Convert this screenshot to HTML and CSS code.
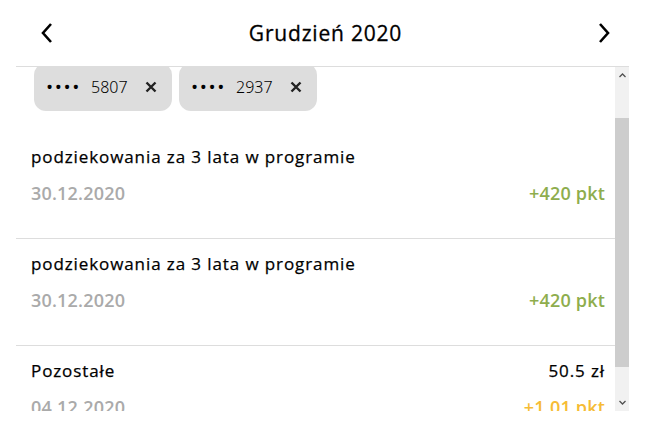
FILE: index.html
```html
<!DOCTYPE html>
<html>
  <head>
    <meta charset="UTF-8">
    <title>Historia punktów</title>
    <link rel="stylesheet" href="styles.css">
  </head>
  <body>
    <div id="panel">
      <div id="month-bar">
        <button class="nav" title="Poprzedni miesiąc">
          <svg width="14" height="22" viewBox="0 0 14 22"><path d="M11 2 L3 11 L11 20" fill="none" stroke="#000" stroke-width="2.6"/></svg>
        </button>
        <h1>Grudzień 2020</h1>
        <button class="nav" title="Następny miesiąc">
          <svg width="14" height="22" viewBox="0 0 14 22"><path d="M3 2 L11 11 L3 20" fill="none" stroke="#000" stroke-width="2.6"/></svg>
        </button>
      </div>
      <div id="body">
        <div id="list">
          <div id="cards">
            <span class="chip"><span class="dots">••••</span><span class="num">5807</span>
              <svg class="x" width="12" height="12" viewBox="0 0 12 12"><path d="M1.5 1.5 L10.5 10.5 M10.5 1.5 L1.5 10.5" stroke="#222" stroke-width="2.4"/></svg></span>
            <span class="chip"><span class="dots">••••</span><span class="num">2937</span>
              <svg class="x" width="12" height="12" viewBox="0 0 12 12"><path d="M1.5 1.5 L10.5 10.5 M10.5 1.5 L1.5 10.5" stroke="#222" stroke-width="2.4"/></svg></span>
          </div>
          <div class="entry">
            <div class="row"><span class="name">podziekowania za 3 lata w programie</span></div>
            <div class="row sub"><span class="date">30.12.2020</span><span class="pts">+420 pkt</span></div>
          </div>
          <div class="entry">
            <div class="row"><span class="name">podziekowania za 3 lata w programie</span></div>
            <div class="row sub"><span class="date">30.12.2020</span><span class="pts">+420 pkt</span></div>
          </div>
          <div class="entry">
            <div class="row"><span class="name">Pozostałe</span><span class="amount">50.5 zł</span></div>
            <div class="row sub"><span class="date">04.12.2020</span><span class="pts gold">+1.01 pkt</span></div>
          </div>
          <div class="entry">
            <div class="row"><span class="name">Pozostałe</span><span class="amount">12.0 zł</span></div>
            <div class="row sub"><span class="date">02.12.2020</span><span class="pts gold">+0.24 pkt</span></div>
          </div>
        </div>
        <div id="bar">
          <div class="arrow"><svg width="7" height="5" viewBox="0 0 7 5"><path d="M0.5 4 L3.5 1 L6.5 4" fill="none" stroke="#505050" stroke-width="1.3"/></svg></div>
          <div class="track">
            <div class="gap-top"></div>
            <div class="thumb"></div>
            <div class="gap-bottom"></div>
          </div>
          <div class="arrow"><svg width="7" height="5" viewBox="0 0 7 5"><path d="M0.5 1 L3.5 4 L6.5 1" fill="none" stroke="#505050" stroke-width="1.3"/></svg></div>
        </div>
      </div>
    </div>
    <script>
      // list is a little scrolled so the card chips sit under the header line
      document.getElementById('list').scrollTop = 4;
    </script>
  </body>
</html>
```

FILE: styles.css
```css
html,
body {
  margin: 0;
  padding: 0;
  background: #fff;
  color: #000;
  font-family: "Open Sans", Lato, sans-serif;
}

#panel {
  margin: 0 20px 0 16px;
}

#month-bar {
  height: 66px;
  display: flex;
  align-items: center;
  justify-content: space-between;
  padding: 0 18px 0 24px;
  border-bottom: 1px solid #ddd;
}

#month-bar h1 {
  margin: 0;
  font-size: 21px;
  font-weight: 500;
  letter-spacing: 0.8px;
  -webkit-text-stroke: 0.3px #000;
}

.nav {
  border: 0;
  background: none;
  padding: 0;
  display: flex;
}

#body {
  display: flex;
  height: 344px;
}

#list {
  flex: 1;
  overflow: hidden;
}

#cards {
  display: flex;
  gap: 7px;
  padding: 0 0 21px 18px;
}

.chip {
  display: flex;
  align-items: center;
  width: 138px;
  height: 48px;
  box-sizing: border-box;
  padding: 0 0 0 12px;
  background: #ddd;
  border-radius: 12px;
  font-size: 16px;
}

.chip .dots {
  font-size: 19px;
  letter-spacing: 1.6px;
  width: 45px;
}

.chip .num {
  font-family: "Noto Sans", sans-serif;
  font-weight: 300;
  width: 54px;
}

.entry {
  padding: 15px 10px 35px 15px;
  border-bottom: 1px solid #ddd;
}

.row {
  display: flex;
  justify-content: space-between;
  line-height: 20px;
  font-size: 17px;
  font-weight: 500;
  letter-spacing: 0.9px;
  -webkit-text-stroke: 0.25px #000;
}

.row.sub {
  margin-top: 16px;
  font-size: 18px;
  font-weight: 600;
  letter-spacing: 0.2px;
  -webkit-text-stroke: 0;
}

.date {
  color: #aaa;
}

.pts {
  color: #8ead4d;
}

.pts.gold {
  color: #f6bc35;
}

#bar {
  width: 14px;
  display: flex;
  flex-direction: column;
  background: #f1f1f1;
}

.arrow {
  height: 17px;
  display: flex;
  align-items: center;
  justify-content: center;
}

.track {
  flex: 1;
  display: flex;
  flex-direction: column;
}

.gap-top {
  height: 34px;
}

.thumb {
  height: 249px;
  background: #cdcdcd;
}

.gap-bottom {
  flex: 1;
}
```
